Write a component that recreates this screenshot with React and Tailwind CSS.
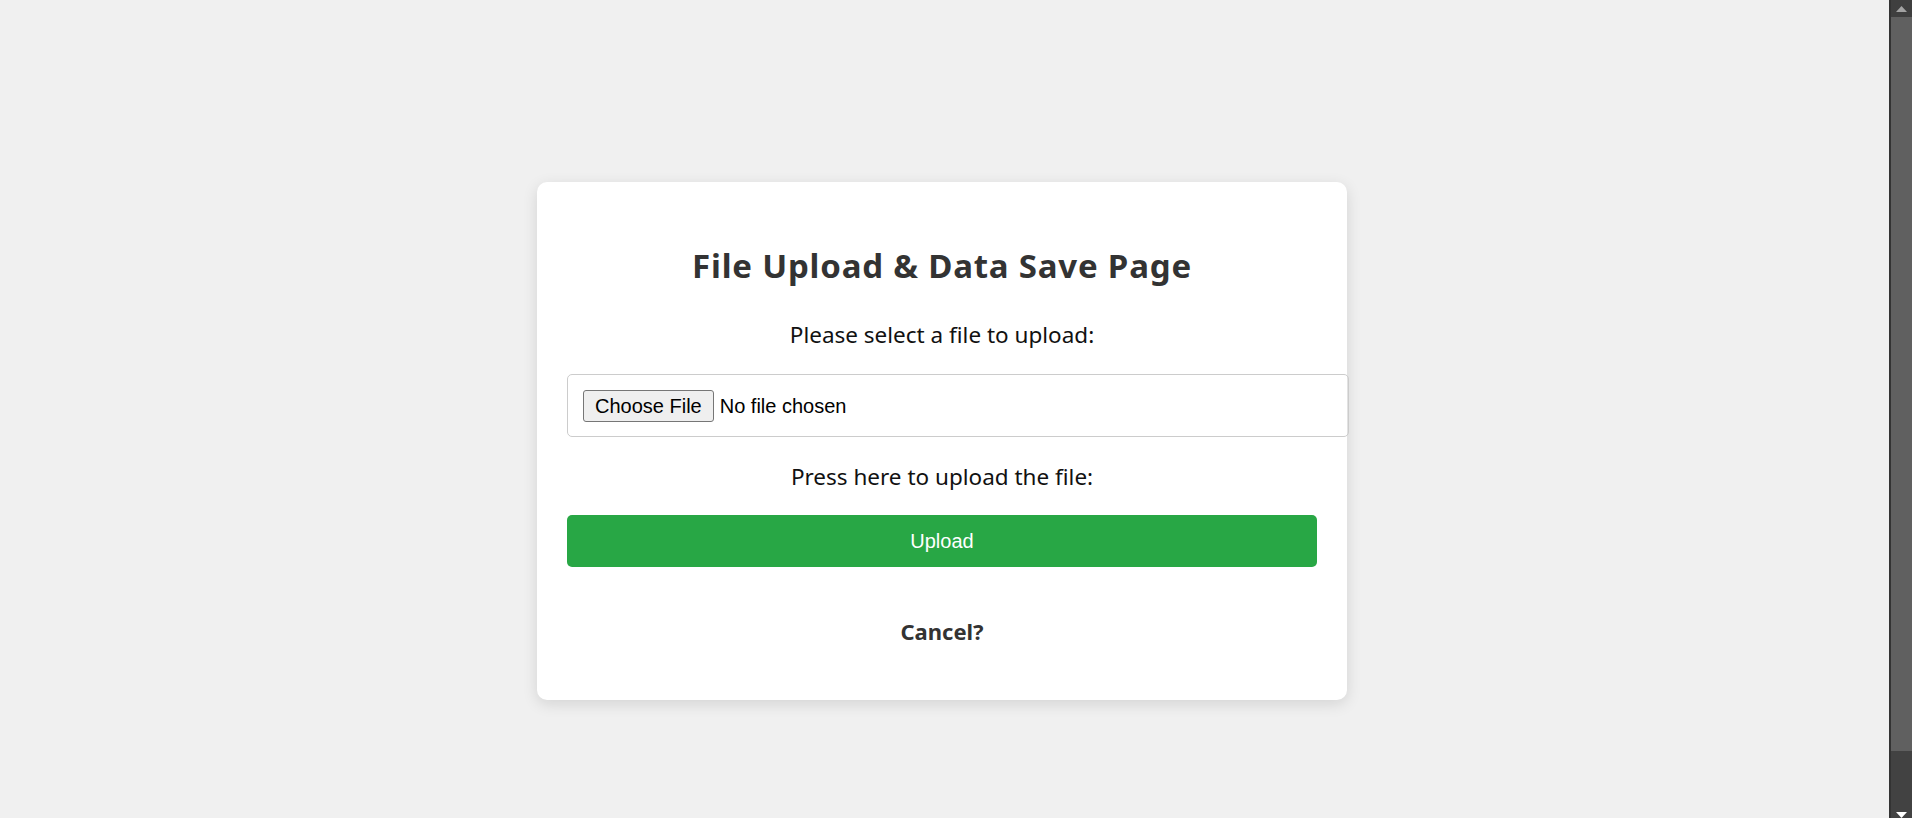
import React from "react";

const sans = "font-['Noto_Sans','Open_Sans',sans-serif]";
const arial = "font-['Liberation_Sans',Arial,sans-serif]";

const FakeScrollbar = () => (
  <div className="w-[23px] h-screen flex flex-col bg-[#424242] border-l-2 border-[#333333]">
    <div className="h-[17px] flex items-center justify-center bg-[#3f3f3f]">
      <svg width="11" height="6" viewBox="0 0 11 6">
        <polygon points="0,6 11,6 5.5,0" fill="#a3a3a3" />
      </svg>
    </div>
    <div className="h-[734px] bg-[#606060]" />
    <div className="flex-1" />
    <div className="h-[6px] flex justify-center">
      <svg width="11" height="6" viewBox="0 0 11 6">
        <polygon points="0,0 11,0 5.5,6" fill="#ffffff" />
      </svg>
    </div>
  </div>
);

export default function App() {
  return (
    <div className="flex h-screen w-full overflow-hidden bg-white">
      <main className="flex-1 bg-[#f0f0f0] flex justify-center items-start pt-[182px] pr-[5px]">
        <div
          className={`w-[810px] bg-white rounded-[10px] shadow-[0_4px_15px_rgba(0,0,0,0.12)] px-[30px] pt-[65px] pb-[55px] text-center ${sans}`}
        >
          <h1 className="text-[33px] leading-[38px] tracking-[0.8px] font-bold text-[#333]">
            File Upload &amp; Data Save Page
          </h1>

          <p className="mt-[36px] text-[22.5px] leading-[28px] text-[#111]">
            Please select a file to upload:
          </p>

          <input
            type="file"
            className={`mt-[25px] block w-full box-content h-[31px] p-[15px] border border-[#cccccc] rounded-[5px] text-[20px] text-black text-left ${arial} file:h-[32px] file:px-[11px] file:mr-[6px] file:border file:border-[#767676] file:rounded-[3px] file:bg-[#efefef] file:text-black file:text-[20px]`}
          />

          <p className="mt-[26px] text-[22.5px] leading-[28px] text-[#111]">
            Press here to upload the file:
          </p>

          <button
            className={`mt-[24px] w-full h-[52px] bg-[#28a745] text-white text-[20px] rounded-[5px] ${arial}`}
          >
            Upload
          </button>

          <p className="mt-[50px] text-[22px] leading-[28px] font-bold text-[#333]">
            Cancel?
          </p>
        </div>
      </main>
      <FakeScrollbar />
      <div className="w-[7px] h-screen bg-white" />
    </div>
  );
}
